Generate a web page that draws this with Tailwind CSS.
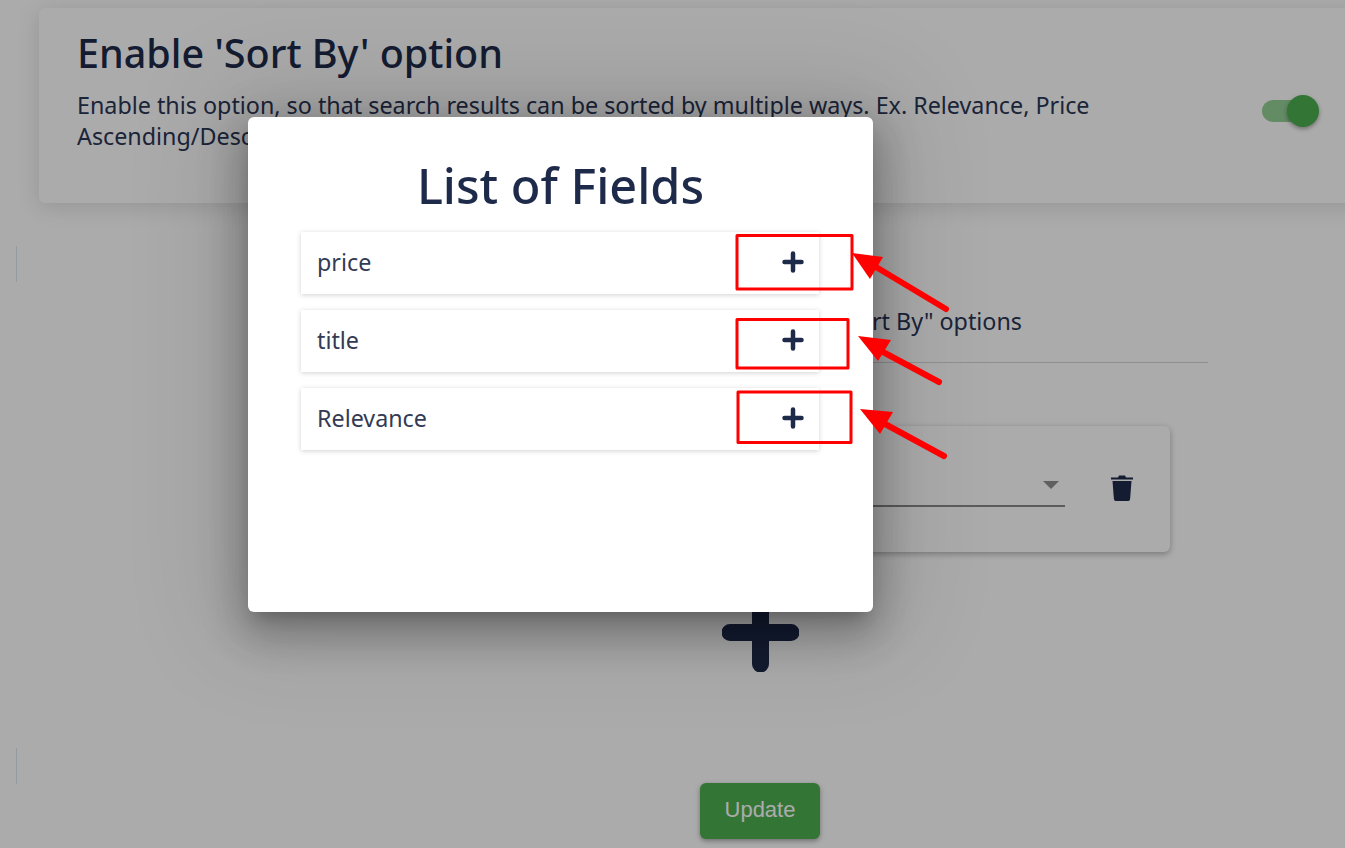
<!DOCTYPE html>
<html lang="en">
<head>
  <meta charset="UTF-8" />
  <title>Sort By settings</title>
  <script src="https://cdn.jsdelivr.net/npm/@tailwindcss/browser@4"></script>
</head>
<body class="relative w-[1345px] h-[848px] overflow-hidden bg-white text-[#1e2a4a] font-['Noto_Sans','Open_Sans',sans-serif]">

<!-- page behind the dialog -->
<div class="flex flex-col h-full">
  <section class="ml-[39px] mr-[-20px] mt-[8px] h-[195px] flex-none flex justify-between rounded-md bg-white shadow-[0_4px_22px_rgba(0,0,0,0.13)] pl-[38px] pr-[53px] pt-[19px]">
    <div class="w-[1040px]">
      <h1 class="text-[39.500px] leading-[52px] font-medium">Enable 'Sort By' option</h1>
      <p class="mt-[11px] text-[23.300px] leading-[31px] text-[#2b3655]">Enable this option, so that search results can be sorted by multiple ways. Ex. Relevance, Price Ascending/Descending etc.</p>
    </div>
    <div class="relative mt-[73px] mr-[2px] w-[48px] h-[22px] rounded-full bg-[#4caf50]/60">
      <span class="absolute -right-[9px] -top-[5px] w-[32px] h-[32px] rounded-full bg-[#4caf50] shadow-[0_2px_4px_rgba(0,0,0,0.35)]"></span>
    </div>
  </section>

  <div class="ml-[300px] w-[908px] flex-none">
    <div class="mt-[99px] h-[61px] border-b border-[#d6d6d6] text-[23.300px] leading-[38px] flex justify-end pr-[186px] text-[#2b3655]">Add "Sort By" options</div>
  </div>

  <div class="ml-[300px] mt-[63px] w-[870px] h-[126px] flex-none flex items-start justify-end rounded-md bg-white shadow-[0_2px_6px_rgba(0,0,0,0.3)] pr-[35px] pt-[40px]">
    <div class="w-[400px] h-[41px] border-b-2 border-[#8a8a8a] flex justify-between pr-[6px] text-[23.300px] leading-[36px]">
      <span>Ascending</span>
      <svg class="mt-[15px]" width="16" height="8" viewBox="0 0 16 8"><path d="M0 0h16L8 8z" fill="#8f8f8f"/></svg>
    </div>
    <svg class="ml-[44px] mt-[6px]" width="26" height="30" viewBox="0 0 26 30" fill="#1e2a4a">
      <path d="M3.500 9h19l-1.400 18a2 2 0 0 1-2 2H6.900a2 2 0 0 1-2-2z"/>
      <path d="M2 5.500h7l1-2h6l1 2h7v2h-22z"/>
    </svg>
  </div>

  <div class="ml-[722px] mt-[41px] flex-none">
    <svg class="block" width="77" height="79" viewBox="0 0 77 79">
      <path d="M38.500 8v63M8 39.500h61" stroke="#1e2a4a" stroke-width="17" stroke-linecap="round"/>
    </svg>
  </div>

  <button class="ml-[700px] mt-[111px] w-[120px] h-[56px] flex-none rounded-md bg-[#4caf50] text-white text-[22px] leading-[52px] pb-[2px] shadow-[0_2px_5px_rgba(0,0,0,0.35)] font-['Liberation_Sans',sans-serif]">Update</button>
</div>

<!-- small rule marks on the left edge -->
<span class="absolute left-[16px] top-[246px] w-px h-[36px] bg-[#dbe7f0]"></span>
<span class="absolute left-[16px] top-[748px] w-px h-[36px] bg-[#dbe7f0]"></span>

<!-- backdrop -->
<div class="absolute inset-0 bg-black/[0.33]"></div>

<!-- dialog -->
<div class="absolute left-[248px] top-[117px] w-[625px] h-[495px] rounded-md bg-white px-[53px] pt-[36px] shadow-[0_11px_15px_-7px_rgba(0,0,0,0.2),0_24px_38px_3px_rgba(0,0,0,0.14),0_9px_46px_8px_rgba(0,0,0,0.16),0_0_100px_30px_rgba(0,0,0,0.1)]">
  <h2 class="text-center text-[48.600px] leading-[64px] font-medium text-[#1e2a4a]">List of Fields</h2>
  <ul class="mt-[15px] flex flex-col gap-[16px] w-[518px]">
    <li class="h-[62px] flex items-center justify-between pl-[16px] pr-[15px] bg-white shadow-[0_1px_5px_rgba(0,0,0,0.18)] text-[23.300px] leading-[60px] text-[#333b54]">
      <span class="-mt-[2px]">price</span>
      <svg width="22" height="22" viewBox="0 0 22 22" class="-mt-[2px]"><path d="M11 2.500v17M2.500 11h17" stroke="#1e2a4a" stroke-width="4.500" stroke-linecap="round"/></svg>
    </li>
    <li class="h-[62px] flex items-center justify-between pl-[16px] pr-[15px] bg-white shadow-[0_1px_5px_rgba(0,0,0,0.18)] text-[23.300px] leading-[60px] text-[#333b54]">
      <span class="-mt-[2px]">title</span>
      <svg width="22" height="22" viewBox="0 0 22 22" class="-mt-[2px]"><path d="M11 2.500v17M2.500 11h17" stroke="#1e2a4a" stroke-width="4.500" stroke-linecap="round"/></svg>
    </li>
    <li class="h-[62px] flex items-center justify-between pl-[16px] pr-[15px] bg-white shadow-[0_1px_5px_rgba(0,0,0,0.18)] text-[23.300px] leading-[60px] text-[#333b54]">
      <span class="-mt-[2px]">Relevance</span>
      <svg width="22" height="22" viewBox="0 0 22 22" class="-mt-[2px]"><path d="M11 2.500v17M2.500 11h17" stroke="#1e2a4a" stroke-width="4.500" stroke-linecap="round"/></svg>
    </li>
  </ul>
</div>

<!-- red annotations on the screenshot -->
<svg class="absolute inset-0 pointer-events-none" width="1345" height="848" viewBox="0 0 1345 848">
  <g fill="none" stroke="#ff0000" stroke-width="3" stroke-linejoin="round">
    <rect x="737" y="235.500" width="115" height="53.500"/>
    <rect x="737" y="319.500" width="111" height="48.500"/>
    <rect x="738" y="392" width="113" height="50.500"/>
  </g>
  <g stroke="#ff0000" stroke-width="6" stroke-linecap="round">
    <path d="M876 267L946 309"/>
    <path d="M883 352L939 382"/>
    <path d="M885 424L944 456"/>
  </g>
  <g fill="#ff0000">
    <path d="M852 253L883 257L870 279z"/>
    <path d="M858 336L891 340L878 361z"/>
    <path d="M860 409L893 412L880 434z"/>
  </g>
</svg>
</body>
</html>
